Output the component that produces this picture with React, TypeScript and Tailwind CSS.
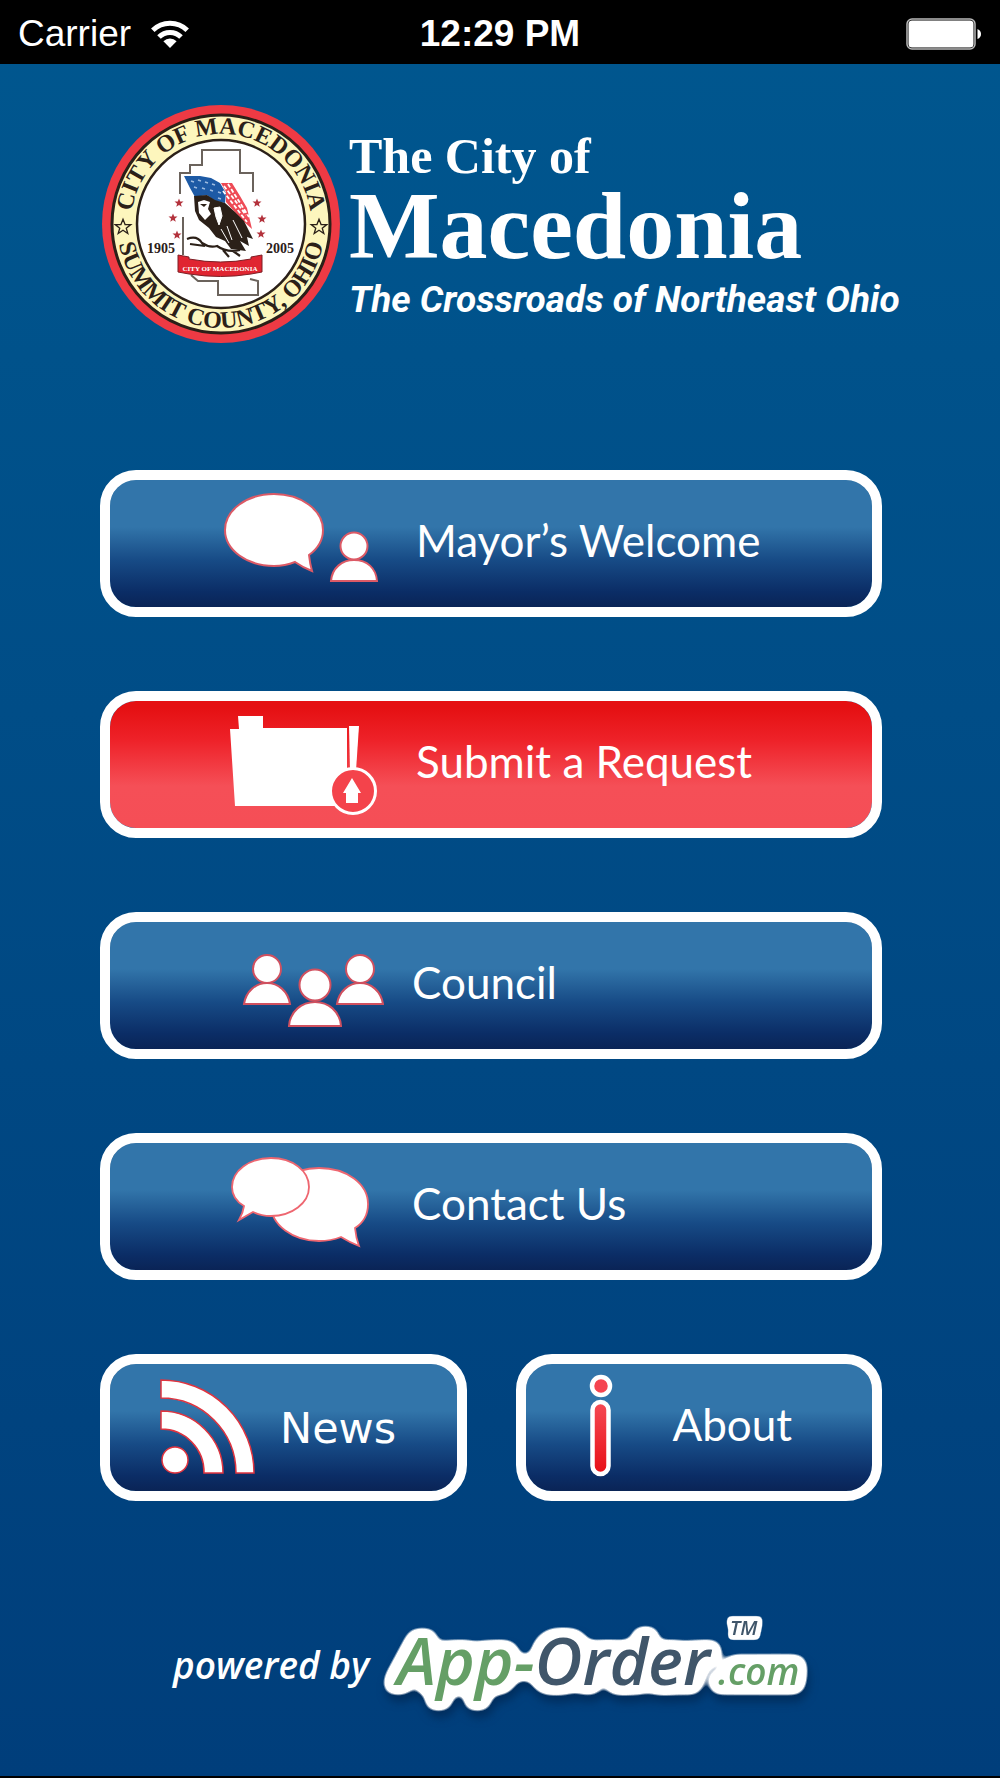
import type { ReactNode } from "react";
import clsx from "clsx";

const STAR = "M0 -6 L1.6 -1.9 L6 -1.9 L2.5 0.9 L3.7 5 L0 2.5 L-3.7 5 L-2.5 0.9 L-6 -1.9 L-1.6 -1.9 Z";

const sealStars = [
	[78, 99],
	[72, 114],
	[76, 131],
	[156, 99],
	[161, 115],
	[160, 130],
];

function WifiIcon() {
	return (
		<svg viewBox="0 0 38 28" className="h-7 w-[38px]" aria-hidden="true">
			<g fill="none" stroke="#fff" strokeWidth="5">
				<path d="M1.8 10.2 A24.5 24.5 0 0 1 36.2 10.2" />
				<path d="M8 17 A15.5 15.5 0 0 1 30 17" />
			</g>
			<path d="M12.4 21.2 A9.4 9.4 0 0 1 25.6 21.2 L19 28 Z" fill="#fff" />
		</svg>
	);
}

function BatteryIcon() {
	return (
		<svg viewBox="0 0 76 32" className="h-8 w-[76px]" aria-hidden="true">
			<rect x="1" y="1" width="68" height="30" rx="5" fill="none" stroke="#b9b9b9" strokeWidth="1.5" />
			<rect x="2.5" y="2.5" width="65" height="27" rx="3.5" fill="#fff" />
			<path d="M71.5 11 Q75 12.5 75 16 Q75 19.5 71.5 21 Z" fill="#fff" />
		</svg>
	);
}

function CitySeal() {
	return (
		<svg viewBox="0 0 240 240" className="size-60 shrink-0" role="img" aria-label="Seal of the City of Macedonia">
			<defs>
				<path id="seal-top" d="M30 120 A90 90 0 0 1 210 120" />
				<path id="seal-bottom" d="M16 120 A104 104 0 0 0 224 120" />
			</defs>
			<circle cx="120" cy="120" r="119" fill="#ee3a44" />
			<circle cx="120" cy="120" r="109" fill="#fdf6bd" stroke="#2b2018" strokeWidth="3" />
			<circle cx="120" cy="120" r="84" fill="#fff" stroke="#2b2018" strokeWidth="2.5" />

			{/* Ring lettering */}
			<g fill="#2b2018" fontFamily="'Liberation Serif', serif" fontWeight="700" fontSize="24" textAnchor="middle">
				<text>
					<textPath href="#seal-top" startOffset="50%">CITY OF MACEDONIA</textPath>
				</text>
				<text>
					<textPath href="#seal-bottom" startOffset="50%">SUMMIT COUNTY, OHIO</textPath>
				</text>
			</g>
			<g fill="none" stroke="#2b2018" strokeWidth="1">
				<path d={STAR} transform="translate(22 123) scale(1.3)" />
				<path d={STAR} transform="translate(218 123) scale(1.3)" />
			</g>

			{/* County outline */}
			<g fill="none" stroke="#6b635c" strokeWidth="2">
				<path d="M79 90 V69 H89 V61 H101 V46 H139 V69 H152 V88" />
				<path d="M82 113 V151" />
				<path d="M90 171 L97 177 H117 V191 H157 V177 L149 175" />
			</g>

			{sealStars.map(([x, y]) => (
				<path key={`${x}-${y}`} d={STAR} transform={`translate(${x} ${y}) scale(.75)`} fill="#b3323c" />
			))}

			{/* Eagle with the flag */}
			<path d="M83 72 L99 72 L110 74 L119 79 L125 89 L124 99 L114 97 L106 91 L94 93 L89 84 Z" fill="#1d5aa5" />
			<path
				d="M90 77 l3 1 M97 76 l3 1 M104 78 l3 1 M111 80 l3 1 M93 83 l3 1 M101 84 l3 1 M109 86 l3 1 M117 88 l3 1 M117 94 l3 1"
				stroke="#9dbbe0"
				strokeWidth="1.5"
			/>
			<path d="M120 79 L131 79 L139 92 L146 104 L151 125 L141 116 L132 106 L125 98 L125 88 Z" fill="#ee4a55" />
			<path
				d="M123 82 L145 111 M127 80 L148 113 M122 87 L146 118"
				fill="none"
				stroke="#fff"
				strokeWidth="1.8"
				strokeDasharray="4 2"
			/>
			<path
				d="M93 92 L106 91 L114 96 L124 99 L134 108 L143 117 L152 135 L146 133 L148 142 L139 137 L145 147 L130 145 L124 137 L115 133 L108 124 L98 116 L94 107 Z"
				fill="#2b2018"
			/>
			<path d="M97 98 L103 96 L109 98 L107 105 L110 110 L104 116 L98 109 Z" fill="#fff" />
			<path d="M99 100 L106 100 L103 103 Z" fill="#2b2018" />
			<path
				d="M113 104 L119 103 L121 112 L118 121 L115 113 Z M126 122 L131 136 M132 116 L141 134 M120 125 L128 139"
				fill="#fff"
				stroke="#fff"
				strokeWidth="1"
			/>
			<path
				d="M86 135 Q96 131 101 139 Q108 144 116 142 Q126 149 139 146 M89 140 L104 142 M122 146 L128 153 M132 147 L139 152"
				fill="none"
				stroke="#2b2018"
				strokeWidth="2.2"
			/>

			<g fill="#2b2018" fontFamily="'Liberation Serif', serif" fontWeight="700" fontSize="14" textAnchor="middle">
				<text x="60" y="149">1905</text>
				<text x="179" y="149">2005</text>
			</g>
			<path
				d="M77 151 L88 153 L88 155 Q120 161 150 155 L150 153 L161 151 L161 168 L150 170 Q120 175 88 170 L77 168 Z"
				fill="#e02531"
				stroke="#7c1f25"
				strokeWidth="1"
			/>
			<text
				x="119"
				y="167"
				fill="#fff"
				fontFamily="'Liberation Serif', serif"
				fontWeight="700"
				fontSize="7"
				textAnchor="middle">
				CITY OF MACEDONIA
			</text>
		</svg>
	);
}

function WelcomeIcon() {
	return (
		<svg viewBox="0 0 164 127" className="h-[127px] w-[164px] shrink-0" aria-hidden="true">
			<g fill="#fff" stroke="#dc5a66" strokeWidth="2">
				<path d="M89 75 Q103 65 103 50 C103 30 81 14 54 14 C27 14 5 30 5 50 C5 70 27 86 54 86 Q65 86 75 82 Q82 87 92 91 Q90 84 89 75 Z" />
				<path d="M111 101 C112 88 122 80 134 80 C147 80 156 88 157 101 Z" />
				<circle cx="134" cy="66" r="13.5" />
			</g>
		</svg>
	);
}

function FolderIcon() {
	return (
		<svg viewBox="0 0 164 127" className="h-[127px] w-[164px] shrink-0" aria-hidden="true">
			<path d="M18 15 H43 V27 H127 V105 H15 L10 28 H19 Z" fill="#fff" />
			<path d="M129 25 H139 L136 70 H130 Z" fill="#fff" />
			<circle cx="133" cy="90" r="22.5" fill="#f4434b" stroke="#fff" strokeWidth="3" />
			<path d="M132 77 L141 92 H138 V102 H126 V92 H123 Z" fill="#fff" />
		</svg>
	);
}

function CouncilIcon() {
	return (
		<svg viewBox="0 0 164 127" className="h-[127px] w-[164px] shrink-0" aria-hidden="true">
			<g fill="#fff" stroke="#d0505f" strokeWidth="2">
				<path d="M24 82 C26 69 36 61 47 61 C58 61 68 69 70 82 Z" />
				<circle cx="47" cy="47" r="14" />
				<path d="M117 82 C119 69 129 61 140 61 C151 61 161 69 163 82 Z" />
				<circle cx="140" cy="47" r="14" />
				<path d="M69 104 C70 89 82 80 95 80 C108 80 120 89 121 104 Z" />
				<circle cx="95" cy="63" r="15.5" />
			</g>
		</svg>
	);
}

function ContactIcon() {
	return (
		<svg viewBox="0 0 164 127" className="h-[127px] w-[164px] shrink-0" aria-hidden="true">
			<g fill="#fff" stroke="#ee6670" strokeWidth="1.8">
				<path d="M135 85 Q148 77 148 61 C148 41 127 25 99 25 C71 25 51 42 51 62 C51 82 73 98 99 98 Q111 98 121 94 Q129 99 139 103 Q136 95 135 85 Z" />
				<path d="M24 63 Q12 56 12 44 C12 28 29 15 51 15 C73 15 89 28 89 44 C89 60 72 73 51 73 Q41 73 33 69 Q26 73 19 77 Q23 70 24 63 Z" />
			</g>
		</svg>
	);
}

function NewsIcon() {
	return (
		<svg viewBox="0 0 105 127" className="h-[127px] w-[105px] shrink-0" aria-hidden="true">
			<g fill="#fff" stroke="#e0343f" strokeWidth="1.5">
				<path d="M6 16 A93 93 0 0 1 99 109 H81 A75 75 0 0 0 6 34 Z" />
				<path d="M6 47 A62 62 0 0 1 68 109 H49 A43 43 0 0 0 6 65 Z" />
				<circle cx="20" cy="96" r="13" />
			</g>
		</svg>
	);
}

function InfoIcon() {
	return (
		<svg viewBox="0 0 24 127" className="h-[127px] w-6 shrink-0" aria-hidden="true">
			<defs>
				<linearGradient id="info-bar" x1="0" y1="0" x2="0" y2="1">
					<stop offset="0" stopColor="#f54a54" />
					<stop offset="1" stopColor="#e80f16" />
				</linearGradient>
			</defs>
			<g stroke="#fff" strokeWidth="4.5">
				<circle cx="12" cy="22" r="9" fill="#f54450" />
				<rect x="3.5" y="38" width="16" height="72" rx="8" fill="url(#info-bar)" />
			</g>
		</svg>
	);
}

function AppOrderLogo() {
	return (
		<svg viewBox="0 0 450 116" className="h-[116px] w-[450px] shrink-0 overflow-visible" role="img" aria-label="App-Order.com">
			<defs>
				{/* Rounded white halo with a soft shadow under it */}
				<filter id="halo" filterUnits="userSpaceOnUse" x="-20" y="-20" width="490" height="160" colorInterpolationFilters="sRGB">
					<feMorphology in="SourceAlpha" operator="dilate" radius="6" />
					<feGaussianBlur stdDeviation="6" />
					<feComponentTransfer result="shape">
						<feFuncA type="linear" slope="9" intercept="-1.7" />
					</feComponentTransfer>
					<feFlood floodColor="#fff" />
					<feComposite in2="shape" operator="in" />
					<feDropShadow dx="2" dy="7" stdDeviation="4" floodColor="#001c40" floodOpacity="0.5" />
					<feMerge>
						<feMergeNode />
						<feMergeNode in="SourceGraphic" />
					</feMerge>
				</filter>
				<filter id="halo-small" filterUnits="userSpaceOnUse" x="340" y="-10" width="70" height="60" colorInterpolationFilters="sRGB">
					<feMorphology in="SourceAlpha" operator="dilate" radius="4" />
					<feGaussianBlur stdDeviation="2" />
					<feComponentTransfer result="shape">
						<feFuncA type="linear" slope="5" intercept="-1.2" />
					</feComponentTransfer>
					<feFlood floodColor="#fff" />
					<feComposite in2="shape" operator="in" />
					<feMerge>
						<feMergeNode />
						<feMergeNode in="SourceGraphic" />
					</feMerge>
				</filter>
			</defs>
			<g fontFamily="'Open Sans', sans-serif" fontStyle="italic" fontWeight="600">
				<g filter="url(#halo)">
					<text x="20" y="76" fontSize="66" fill="#40566a">
						<tspan fill="#659f66">App-</tspan>Order
					</text>
					<text x="341" y="76" fontSize="37" fill="#659f66">
						.com
					</text>
				</g>
				<text x="353" y="26" fontSize="20" fill="#40566a" filter="url(#halo-small)">
					TM
				</text>
			</g>
		</svg>
	);
}

type MenuButtonProps = {
	label: string;
	icon: ReactNode;
	className: string;
	tone?: "blue" | "red";
};

function MenuButton({ label, icon, className, tone = "blue" }: MenuButtonProps) {
	return (
		<button
			type="button"
			className={clsx(
				"flex h-[147px] w-full items-center rounded-[36px] border-[10px] border-white bg-clip-padding leading-[60px] whitespace-nowrap text-white",
				tone === "red"
					? "bg-[linear-gradient(#e51012_5%,#ee2229_31%,#f54f57_67%,#f54e56)]"
					: "bg-[linear-gradient(#3275aa_37%,#174b86_63%,#0b2d66_88%,#0a2456)]",
				className
			)}>
			{icon}
			<span>{label}</span>
		</button>
	);
}

export default function App() {
	return (
		<div className="flex min-h-screen flex-col border-b-2 border-black bg-[linear-gradient(#00578f,#003e7b)] font-['Lato',sans-serif] text-white">
			{/* Status bar */}
			<div className="grid h-16 grid-cols-3 items-center bg-black px-[18px] pt-1 font-['Liberation_Sans',sans-serif] text-[37px] leading-[44px]">
				<div className="flex items-center gap-5">
					<span>Carrier</span>
					<WifiIcon />
				</div>
				<time className="text-center font-bold">12:29 PM</time>
				<div className="flex justify-end">
					<BatteryIcon />
				</div>
			</div>

			<header className="flex pt-10 pl-[101px]">
				<CitySeal />
				<div className="pt-6 pl-2 whitespace-nowrap">
					<h1 className="font-['Liberation_Serif',serif] font-bold">
						<span className="block text-[50px] leading-[56px]">The City of</span>
						<span className="block text-[96px] leading-[84px]">Macedonia</span>
					</h1>
					<p className="font-['Roboto',sans-serif] text-[37px] leading-[64px] font-bold italic">
						The Crossroads of Northeast Ohio
					</p>
				</div>
			</header>

			<nav className="flex flex-col gap-[74px] pt-[126px] pr-[118px] pl-[100px]">
				<MenuButton label="Mayor’s Welcome" icon={<WelcomeIcon />} className="gap-8 pl-[110px] text-[44px] [&>span]:pb-2" />
				<MenuButton
					label="Submit a Request"
					icon={<FolderIcon />}
					className="gap-8 pl-[110px] text-[44px] [&>span]:pb-2"
					tone="red"
				/>
				<MenuButton label="Council" icon={<CouncilIcon />} className="gap-7 pl-[110px] text-[44px] [&>span]:pb-2" />
				<MenuButton label="Contact Us" icon={<ContactIcon />} className="gap-7 pl-[110px] text-[44px] [&>span]:pb-2" />
				<div className="grid grid-cols-2 gap-[49px]">
					<MenuButton
						label="News"
						icon={<NewsIcon />}
						className="gap-5 pl-[45px] font-['DejaVu_Sans',sans-serif] text-[43px]"
					/>
					<MenuButton label="About" icon={<InfoIcon />} className="gap-[60px] pl-[63px] text-[44px] [&>span]:pb-2" />
				</div>
			</nav>

			<footer className="flex items-center gap-2 pt-[108px] pb-[51px] pl-[173px]">
				<span className="pb-1 font-['Open_Sans',sans-serif] text-[37px] leading-[48px] font-semibold whitespace-nowrap italic">
					powered by
				</span>
				<AppOrderLogo />
			</footer>
		</div>
	);
}
